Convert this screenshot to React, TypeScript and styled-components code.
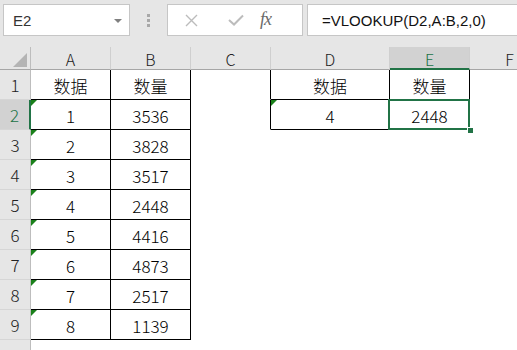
import React from 'react';
import styled, { createGlobalStyle, css } from 'styled-components';

const GlobalStyle = createGlobalStyle`
  html, body {
    margin: 0;
    padding: 0;
    background: #ffffff;
    overflow: hidden;
  }
`;

const GREEN = '#217346';
const CELL_FONT = `'Noto Sans CJK SC', 'Liberation Sans', sans-serif`;

const Window = styled.div`
  width: 517px;
  height: 350px;
  display: flex;
  flex-direction: column;
  overflow: hidden;
  background: #ffffff;
`;

const Toolbar = styled.div`
  height: 47px;
  flex: none;
  display: flex;
  align-items: flex-start;
  padding: 4px 0 0 3px;
  box-sizing: border-box;
  background: #e6e6e6;
`;

const Box = styled.div`
  height: 32px;
  box-sizing: border-box;
  border: 1px solid #c6c6c6;
  background: #ffffff;
  display: flex;
  align-items: center;
`;

const NameBox = styled(Box)`
  width: 127px;
  justify-content: space-between;
  padding: 0 7px 0 9px;
  font-family: 'Liberation Sans', sans-serif;
  font-size: 15px;
  color: #333333;
`;

const DropArrow = styled.span`
  width: 0;
  height: 0;
  border-left: 4px solid transparent;
  border-right: 4px solid transparent;
  border-top: 4px solid #808080;
  margin-top: 1px;
`;

const Grip = styled.div`
  width: 37px;
  height: 32px;
  display: flex;
  flex-direction: column;
  align-items: center;
  justify-content: center;
  gap: 2px;
`;

const GripDot = styled.span`
  width: 3px;
  height: 3px;
  background: #a8a8a8;
`;

const FxBox = styled(Box)`
  width: 136px;
  padding: 0 0 0 14px;
`;

const IconSlot = styled.span<{ $gap?: number }>`
  width: 18px;
  margin-left: ${(p) => p.$gap ?? 0}px;
  display: flex;
  align-items: center;
  justify-content: center;
`;

const FxLabel = styled.span`
  font-family: 'Liberation Serif', serif;
  font-style: italic;
  font-size: 18px;
  color: #6a6a6a;
  letter-spacing: -1px;
  margin-left: 15px;
  margin-top: -2px;
`;

const FormulaBox = styled(Box)`
  flex: 1;
  margin-left: 4px;
  border-right: none;
  padding-left: 14px;
  font-family: 'Liberation Sans', sans-serif;
  font-size: 15px;
  color: #111111;
`;

const Sheet = styled.div`
  display: grid;
  grid-template-columns: 31px 80px 80px 80px 119px 80px 80px;
  grid-template-rows: 23px repeat(10, 30px);
  font-family: ${CELL_FONT};
  font-weight: 300;
`;

const HeadBase = css`
  box-sizing: border-box;
  background: #e6e6e6;
  display: flex;
  justify-content: center;
  font-size: 16px;
  color: #222222;
`;

const Corner = styled.div`
  ${HeadBase};
  border-right: 1px solid #bdbdbd;
  border-bottom: 1px solid #a6a6a6;
  position: relative;
`;

const CornerTriangle = styled.span`
  position: absolute;
  right: 3px;
  bottom: 2px;
  width: 0;
  height: 0;
  border-left: 14px solid transparent;
  border-bottom: 14px solid #b4b4b4;
`;

const ColHead = styled.div<{ $active?: boolean }>`
  ${HeadBase};
  align-items: center;
  padding-top: 2px;
  border-right: 1px solid #cfcfcf;
  border-bottom: 1px solid #a6a6a6;
  ${(p) =>
    p.$active &&
    css`
      background: #d2d2d2;
      color: ${GREEN};
      border-bottom: 2px solid ${GREEN};
    `}
`;

const RowHead = styled.div<{ $active?: boolean }>`
  ${HeadBase};
  align-items: flex-end;
  padding-bottom: 2px;
  font-size: 17px;
  border-right: 1px solid #bdbdbd;
  border-bottom: 1px solid #d6d6d6;
  ${(p) =>
    p.$active &&
    css`
      background: #d2d2d2;
      color: ${GREEN};
      border-right: 2px solid ${GREEN};
    `}
`;

const Cell = styled.div<{ $right: string; $bottom: string }>`
  position: relative;
  box-sizing: border-box;
  display: flex;
  align-items: center;
  justify-content: center;
  padding-top: 2px;
  font-size: 17px;
  color: #000000;
  border-right: 1px solid ${(p) => p.$right};
  border-bottom: 1px solid ${(p) => p.$bottom};
`;

const TextFlag = styled.span`
  position: absolute;
  left: 0;
  top: 0;
  width: 0;
  height: 0;
  border-top: 6px solid #1a801a;
  border-right: 6px solid transparent;
`;

const Selection = styled.span`
  position: absolute;
  z-index: 2;
  left: -2px;
  top: -1px;
  right: -1px;
  bottom: -1px;
  border: 2px solid ${GREEN};
  pointer-events: none;

  &::after {
    content: '';
    position: absolute;
    right: -5px;
    bottom: -5px;
    width: 5px;
    height: 5px;
    background: ${GREEN};
    border-left: 1px solid #ffffff;
    border-top: 1px solid #ffffff;
  }
`;

const COLS = ['A', 'B', 'C', 'D', 'E', 'F'];
const ROWS = 10;

type CellData = { text: string; flag?: boolean };

const data: Record<string, CellData> = {
  A1: { text: '数据' },
  B1: { text: '数量' },
  D1: { text: '数据' },
  E1: { text: '数量' },
  D2: { text: '4', flag: true },
  E2: { text: '2448' },
};

const values = [3536, 3828, 3517, 2448, 4416, 4873, 2517, 1139];
values.forEach((v, i) => {
  data[`A${i + 2}`] = { text: String(i + 1), flag: true };
  data[`B${i + 2}`] = { text: String(v) };
});

// cells with a thin black border round them
const boxed = (c: number, r: number) => {
  if (c <= 1 && r >= 1 && r <= 9) return true;
  if ((c === 3 || c === 4) && r >= 1 && r <= 2) return true;
  return false;
};

const ActiveCol = 4;
const ActiveRow = 2;

const CrossIcon = () => (
  <svg width="15" height="15" viewBox="0 0 15 15">
    <path d="M2 2 L13 13 M13 2 L2 13" stroke="#bcbcbc" strokeWidth="1.4" fill="none" />
  </svg>
);

const CheckIcon = () => (
  <svg width="16" height="12" viewBox="0 0 16 12">
    <path d="M1 6 L6 10.5 L15 1.5" stroke="#bcbcbc" strokeWidth="2" fill="none" />
  </svg>
);

const App = () => {
  const cells: React.ReactNode[] = [];

  cells.push(
    <Corner key="corner">
      <CornerTriangle />
    </Corner>
  );
  COLS.forEach((name, c) => {
    cells.push(
      <ColHead key={`h${name}`} $active={c === ActiveCol}>
        {name}
      </ColHead>
    );
  });

  for (let r = 1; r <= ROWS; r++) {
    cells.push(
      <RowHead key={`r${r}`} $active={r === ActiveRow}>
        {r}
      </RowHead>
    );
    COLS.forEach((name, c) => {
      const d = data[`${name}${r}`];
      const right = boxed(c, r) || boxed(c + 1, r) ? '#000000' : '#ffffff';
      const bottom = boxed(c, r) || boxed(c, r + 1) ? '#000000' : '#ffffff';
      cells.push(
        <Cell key={`${name}${r}`} $right={right} $bottom={bottom}>
          {d?.flag && <TextFlag />}
          {d?.text}
          {c === ActiveCol && r === ActiveRow && <Selection />}
        </Cell>
      );
    });
  }

  return (
    <Window>
      <GlobalStyle />
      <Toolbar>
        <NameBox>
          E2
          <DropArrow />
        </NameBox>
        <Grip>
          <GripDot />
          <GripDot />
          <GripDot />
        </Grip>
        <FxBox>
          <IconSlot>
            <CrossIcon />
          </IconSlot>
          <IconSlot $gap={27}>
            <CheckIcon />
          </IconSlot>
          <FxLabel>fx</FxLabel>
        </FxBox>
        <FormulaBox>=VLOOKUP(D2,A:B,2,0)</FormulaBox>
      </Toolbar>
      <Sheet>{cells}</Sheet>
    </Window>
  );
};

export default App;
